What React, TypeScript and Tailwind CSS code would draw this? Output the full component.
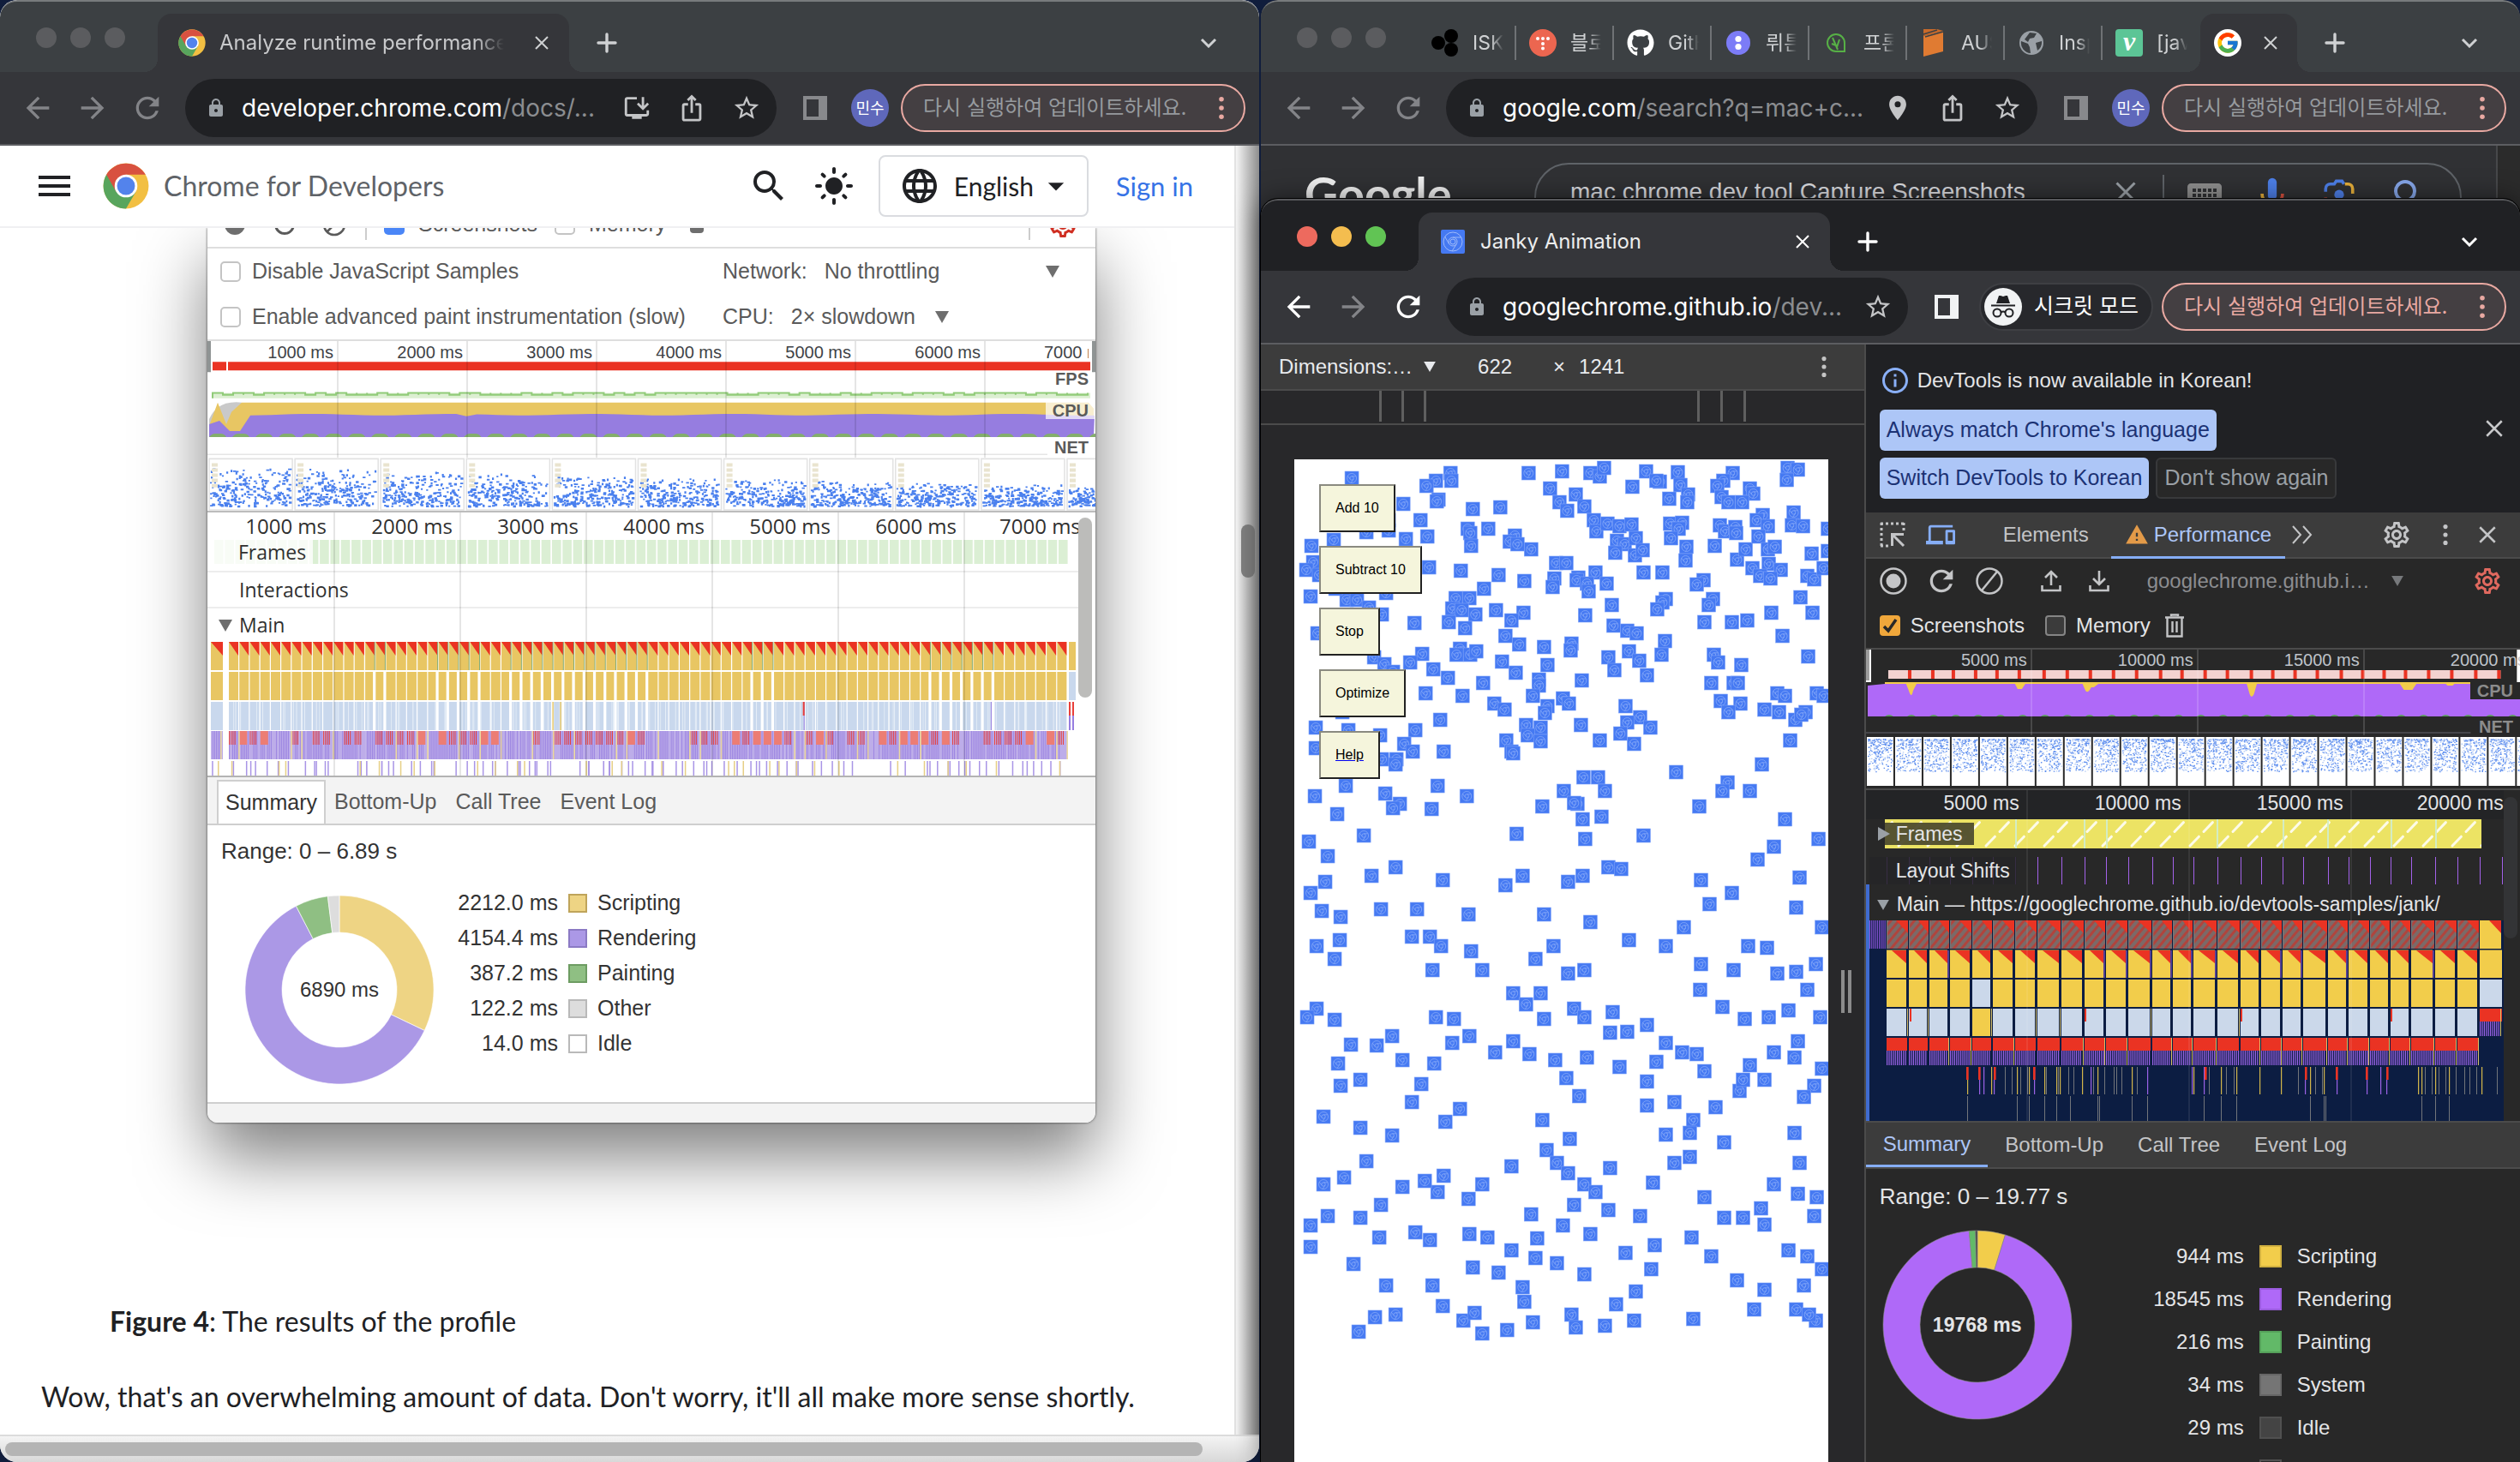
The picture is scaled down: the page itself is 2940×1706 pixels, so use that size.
import type { ReactNode } from "react";
import {
  MdArrowBack,
  MdArrowForward,
  MdRefresh,
  MdLock,
  MdInstallDesktop,
  MdIosShare,
  MdStarBorder,
  MdPlace,
  MdSearch,
  MdLightMode,
  MdLanguage,
  MdKeyboard,
  MdOutlineSettings,
  MdDevices,
  MdOutlineInfo,
  MdWarning,
  MdBlock,
  MdArrowDropDown,
} from "react-icons/md";
import { FcGoogle } from "react-icons/fc";
import { FaGithub } from "react-icons/fa";

const UI = "font-['Inter','Noto_Sans_CJK_KR',sans-serif]";
const HELV = "font-['Liberation_Sans',Arial,sans-serif]";

/* ---------- helpers ---------- */

function seeded(seed: number) {
  let s = seed;
  return () => {
    s = (s * 1664525 + 1013904223) % 4294967296;
    return s / 4294967296;
  };
}

const box = (x: number, y: number, w: number, h: number) => `M${x.toFixed(1)} ${y.toFixed(1)}h${w}v${h}h${-w}z`;

function arc(cx: number, cy: number, ro: number, ri: number, from: number, to: number) {
  const p = (r: number, t: number) => {
    const a = t * 2 * Math.PI - Math.PI / 2;
    return `${(cx + r * Math.cos(a)).toFixed(2)} ${(cy + r * Math.sin(a)).toFixed(2)}`;
  };
  const big = to - from > 0.5 ? 1 : 0;
  return `M${p(ro, from)}A${ro} ${ro} 0 ${big} 1 ${p(ro, to)}L${p(ri, to)}A${ri} ${ri} 0 ${big} 0 ${p(ri, from)}Z`;
}

function Donut({ slices, edge, className }: { slices: [number, string][]; edge: string; className: string }) {
  const total = slices.reduce((a, s) => a + s[0], 0);
  let at = 0;
  return (
    <svg viewBox="0 0 224 224" className={className} aria-hidden="true">
      {slices.map(([v, c]) => {
        const from = at / total;
        at += v;
        return <path key={c} d={arc(112, 112, 110, 67, from, at / total - 0.0001)} fill={c} stroke={edge} strokeWidth="0.6" />;
      })}
    </svg>
  );
}

function ChromeLogo({ className }: { className: string }) {
  return (
    <svg viewBox="0 0 48 48" className={className} aria-hidden="true">
      <circle cx="24" cy="24" r="23.5" fill="#f2bf42" />
      <path d="M24 24 3.7 12.2A23.5 23.5 0 0 0 24 47.5L34.2 29.9z" fill="#58a55d" />
      <path d="M24 24 13.8 29.9 3.7 12.2a23.5 23.5 0 0 1 40.6.1H24z" fill="#d85140" />
      <circle cx="24" cy="24" r="11.8" fill="#fff" />
      <circle cx="24" cy="24" r="9.3" fill="#5383ec" />
    </svg>
  );
}

function Cross({ className }: { className: string }) {
  return (
    <svg viewBox="0 0 16 16" className={className} fill="none" stroke="currentColor" strokeWidth="2" aria-hidden="true">
      <path d="M1 1l14 14M15 1L1 15" />
    </svg>
  );
}

function Plus({ className }: { className: string }) {
  return (
    <svg viewBox="0 0 24 24" className={className} fill="none" stroke="currentColor" strokeWidth="3.4" strokeLinecap="round" aria-hidden="true">
      <path d="M12 2v20M2 12h20" />
    </svg>
  );
}

function Chevron({ className }: { className: string }) {
  return (
    <svg viewBox="0 0 20 12" className={className} fill="none" stroke="currentColor" strokeWidth="3" aria-hidden="true">
      <path d="M2 2l8 8 8-8" />
    </svg>
  );
}

function Dots({ className }: { className: string }) {
  return (
    <svg viewBox="0 0 6 28" className={className} fill="currentColor" aria-hidden="true">
      <circle cx="3" cy="3" r="3" />
      <circle cx="3" cy="14" r="3" />
      <circle cx="3" cy="25" r="3" />
    </svg>
  );
}

function SidePanel({ className }: { className: string }) {
  return (
    <svg viewBox="0 0 28 28" className={className} fill="currentColor" aria-hidden="true">
      <path fillRule="evenodd" d="M0 0h28v28H0zM4 4v20h14V4z" />
    </svg>
  );
}

function Triangle({ className }: { className: string }) {
  return (
    <svg viewBox="0 0 16 14" className={className} fill="currentColor" aria-hidden="true">
      <path d="M0 0h16L8 14z" />
    </svg>
  );
}

function JankIcon({ className }: { className: string }) {
  return (
    <svg viewBox="0 0 28 28" className={className} aria-hidden="true">
      <rect width="28" height="28" rx="2" fill="#4579f2" />
      <g fill="none" stroke="#9dbafa" strokeWidth="1">
        <circle cx="14" cy="14" r="11" />
        <circle cx="14" cy="14" r="5" />
        <circle cx="14" cy="14" r="3" />
        <path d="M14 9h10M9.6 16.5L4.6 8M18.4 16.5L13 25" />
      </g>
    </svg>
  );
}

/* ---------- browser chrome ---------- */

function Lights({ active }: { active?: boolean }) {
  const dot = "h-6 w-6 rounded-full";
  return (
    <div className="flex shrink-0 gap-4 pl-[42px] pb-[28px]">
      <button aria-label="Close window" className={`${dot} ${active ? "bg-[#ed6a5e]" : "bg-[#5b5c5f]"}`} />
      <button aria-label="Minimise window" className={`${dot} ${active ? "bg-[#f4bd4f]" : "bg-[#5b5c5f]"}`} />
      <button aria-label="Zoom window" className={`${dot} ${active ? "bg-[#61c454]" : "bg-[#5b5c5f]"}`} />
    </div>
  );
}

function ActiveTab({ className, children }: { className: string; children: ReactNode }) {
  return (
    <div className={`relative flex h-[68px] shrink-0 items-center rounded-t-2xl bg-[#35363a] ${className}`}>
      <span className="absolute bottom-0 -left-4 h-4 w-4 bg-[radial-gradient(circle_at_0_0,transparent_16px,#35363a_16px)]" />
      <span className="absolute bottom-0 -right-4 h-4 w-4 bg-[radial-gradient(circle_at_100%_0,transparent_16px,#35363a_16px)]" />
      {children}
    </div>
  );
}

function TitleBar({ active, children }: { active?: boolean; children: ReactNode }) {
  return (
    <div
      className={`flex h-[84px] shrink-0 items-end rounded-t-[20px] border-t-2 ${
        active ? "border-[#57585b] bg-[#202124] text-white" : "border-[#787b7d] bg-[#3c4043] text-[#cfd1d3]"
      }`}
    >
      <Lights active={active} />
      {children}
      <div className="flex h-[68px] flex-1 items-center justify-between pl-8 pr-[49px]">
        <button aria-label="New tab">
          <Plus className="h-6 w-6" />
        </button>
        <button aria-label="Search tabs">
          <Chevron className="h-3 w-5" />
        </button>
      </div>
    </div>
  );
}

function WideTab({ icon, title, muted }: { icon: ReactNode; title: string; muted?: boolean }) {
  return (
    <ActiveTab className="ml-[38px] w-[480px] pl-6 pr-6">
      <div className="flex h-8 w-8 shrink-0 items-center justify-center">{icon}</div>
      <span
        className={`ml-4 flex-1 overflow-hidden whitespace-nowrap text-[24px] ${
          muted ? "mask-r-from-90% text-[#c8c9cb]" : "text-[#eceded]"
        }`}
      >
        {title}
      </span>
      <button aria-label="Close tab" className="ml-9">
        <Cross className="h-4 w-4" />
      </button>
    </ActiveTab>
  );
}

function UpdatePill({ active }: { active?: boolean }) {
  return (
    <button
      className={`ml-[14px] flex h-14 w-[402px] shrink-0 items-center justify-between rounded-full border-2 border-[#e9a9a2] bg-[#443f42] pl-6 pr-[23px] text-[24px] ${
        active ? "text-[#e9a9a2]" : "text-[#969a9e]"
      }`}
    >
      <span className="whitespace-nowrap">다시 실행하여 업데이트하세요.</span>
      <Dots className="h-[26px] w-[6px] text-[#e9a9a2]" />
    </button>
  );
}

function Toolbar({
  active,
  host,
  path,
  actions,
  profile,
}: {
  active?: boolean;
  host: string;
  path: string;
  actions: ReactNode;
  profile: ReactNode;
}) {
  return (
    <div className="flex h-[86px] shrink-0 items-center border-b-2 border-[#5c5d61] bg-[#35363a] pl-6 pr-4">
      <button aria-label="Back" className={active ? "text-white" : "text-[#838488]"}>
        <MdArrowBack className="h-10 w-10" />
      </button>
      <button aria-label="Forward" className="ml-6 text-[#838488]">
        <MdArrowForward className="h-10 w-10" />
      </button>
      <button aria-label="Reload" className={`ml-6 ${active ? "text-white" : "text-[#838488]"}`}>
        <MdRefresh className="h-10 w-10" />
      </button>
      <div className="ml-6 flex h-[68px] min-w-0 flex-1 items-center gap-[30px] rounded-full bg-[#202124] pl-6 pr-[18px] text-[#c4c5c7]">
        <MdLock className="h-6 w-6 shrink-0 text-[#9aa0a6]" />
        <div className="-ml-3 min-w-0 flex-1 whitespace-nowrap text-[28px] text-[#8b8d90]">
          <span className="text-white">{host}</span>
          {path}
        </div>
        {actions}
      </div>
      <button aria-label="Side panel" className={`ml-[31px] ${active ? "text-[#f1f3f4]" : "text-[#88898c]"}`}>
        <SidePanel className="h-7 w-7" />
      </button>
      {profile}
      <UpdatePill active={active} />
    </div>
  );
}

const action = "h-[34px] w-[34px]";

function Avatar() {
  return (
    <button className="ml-7 h-11 w-11 shrink-0 rounded-full bg-[#5f68bb] text-[18px] text-white">민수</button>
  );
}

/* ---------- left window: docs page ---------- */

const BLUE = "#4a80ee";

function LightOverview() {
  const r = seeded(7);
  let dots = "";
  let frames = "";
  let pads = "";
  for (let i = 0; i < 11; i++) {
    const x0 = 2 + i * 100;
    frames += box(x0, 136, 97, 59);
    for (let k = 0; k < 5; k++) pads += box(x0 + 3, 141 + k * 6, 7, 4);
    const top = 145 + i * 2.2;
    for (let k = 0; k < 230; k++) {
      const depth = Math.pow(r(), 0.62);
      dots += box(x0 + 1 + r() * 92, top + depth * (190 - top), r() > 0.5 ? 3.4 : 2.2, r() > 0.5 ? 2.6 : 1.8);
    }
  }
  let purple = "M2 111";
  for (let x = 2; x <= 1035; x += 12) {
    const y = x < 12 ? 96 : x < 26 ? 92 : x < 40 ? 104 : 85 + Math.sin(x / 26) * 0.9 + (x > 290 && x < 305 ? 2.5 : 0);
    purple += `L${x} ${y.toFixed(1)}`;
  }
  purple += "L1033 111Z";
  let green = "";
  for (let x = 2; x < 1030; x += 27) green += `M${x} 111q3 -4 7 -4h6q5 0 7 4z`;
  let fps = "M6 66V60";
  for (let x = 6; x < 1024; x += 12) fps += r() > 0.5 ? `H${x}v2v-2H${x + 12}` : `V60H${x}v2H${x + 12}v-2`;
  return (
    <svg viewBox="0 0 1035 198" preserveAspectRatio="none" className="block h-[200px] w-full" aria-hidden="true">
      <path d="M6 60H1029V66H6z" fill="#dcefd2" />
      <path d={fps} fill="none" stroke="#90cb78" strokeWidth="2" />
      <path d="M0 0h4v36H0zM1031 0h4v36h-4z" fill="#8f9494" />
      <path d="M6 24h16v10H6zM24 24h1005v10H24z" fill="#ea3323" />
      <path d="M2 90Q12 68 40 71V111H2z" fill="#c9c9c9" />
      <path d="M2 98L12 71L22 96L28 82L40 71H1027L1033 78V111H2z" fill="#e8c663" />
      <path d={purple} fill="#967de0" />
      <path d={green} fill="#83ae6c" />
      <path d="M0 131H1035" stroke="#e6e6e6" strokeWidth="1.5" />
      <path d={frames} fill="#fff" stroke="#e2e2e2" strokeWidth="1.5" />
      <path d={dots} fill={BLUE} />
      <path d={pads} fill="#e9e4cf" />
      <path d="M0 197H1035" stroke="#bcbcbc" strokeWidth="2" />
    </svg>
  );
}

const GREEN_MARKS = [13, 14, 19, 20, 21, 22, 23, 26, 27, 28, 29, 30, 31, 32, 33, 34, 35, 36, 37, 38, 39, 49, 50, 51, 66, 67, 68, 69, 70, 71, 72];

function LightFlame() {
  const r = seeded(21);
  let gold = "";
  let red = "";
  let gold2 = "";
  let sky = "";
  let skyGaps = "";
  let lilac = "";
  let violet = "";
  let salmon = "";
  let crimson = "";
  let sand = "";
  let deepV = "";
  let deepG = "";
  let green = "";
  for (let i = -1; i < 80; i++) {
    const x = i < 0 ? 4 : 25 + i * 12.22;
    const w = i < 0 ? 14 : 11;
    const gap = GREEN_MARKS.includes(i);
    gold += box(x, 0, w, 33);
    red += `M${x} 0h${w}v16z`;
    gold2 += box(x, 35, gap ? 9 : w, 33);
    sky += box(x, 70, gap ? 9 : w, 33);
    if (r() > 0.25) skyGaps += box(x + r() * 8, 70, 1, 33);
    if (r() > 0.35) skyGaps += box(x + r() * 8, 70, 0.8, 33);
    if (gap) green += box(x + w - 0.4, 0, 1, 33);
    lilac += box(x, 104, i < 0 ? 14 : 12.2, 33);
    for (let k = 0; k < 6; k++) if (r() > 0.25) violet += box(x + k * 2, 104, 0.8, 33);
    const m = r();
    if (m > 0.7) salmon += box(x, 104, 9, 16);
    else if (m > 0.25) for (let k = 0; k < 4; k++) crimson += box(x + k * 2.2, 104, 1, 16);
    if (r() > 0.55) sand += box(x + 11, 104, 1.6, 33);
    if (r() > 0.3) deepV += box(x + r() * 10, 139, 1.5, 18);
    if (r() > 0.6) deepV += box(x + r() * 10, 139, 1.5, 18);
    if (r() > 0.65) deepG += box(x + r() * 10, 139, 1.5, 18);
  }
  return (
    <svg viewBox="0 0 1015 156" preserveAspectRatio="none" className="block h-[156px] w-full" aria-hidden="true">
      <path d={gold} fill="#e8c663" />
      <path d="M1004 0h8v33h-8z" fill="#e8c663" />
      <path d={red} fill="#ea3323" />
      <path d={green} fill="#84ad79" />
      <path d={gold2} fill="#e8c663" />
      <path d={sky} fill="#c9d8ed" />
      <path d="M1004 35h8v33h-8z" fill="#c9d8ed" />
      <path d={skyGaps} fill="#e6eef7" />
      <path d={lilac} fill="#bdade9" />
      <path d={violet} fill="#967de0" />
      <path d={salmon} fill="#ec7d74" />
      <path d={crimson} fill="#e8403a" />
      <path d={sand} fill="#ecd9a0" />
      <path d="M1004 70h2v33h-2zM1008 70h2v33h-2zM913 70h1v33h-1zM695 70h1v33h-1z" fill="#967de0" />
      <path d="M1004 70h2v16h-2zM1008 70h2v16h-2zM694 70h2v16h-2z" fill="#e8403a" />
      <path d="M402 70h1.4v33h-1.4zM411 70h1.4v33h-1.4z" fill="#e8c663" />
      <path d={deepV} fill="#a995e6" />
      <path d={deepG} fill="#e6cf86" />
    </svg>
  );
}

function LightFrames() {
  let d = "";
  for (let i = 0; i < 81; i++) d += box(8 + i * 12.3, 0, 10.6, 28);
  return (
    <svg viewBox="0 0 1015 28" preserveAspectRatio="none" className="block h-7 w-full" aria-hidden="true">
      <path d={d} fill="#dbefd4" />
    </svg>
  );
}

function Tag({ children, className }: { children: ReactNode; className: string }) {
  return <span className={`absolute right-0 px-2 text-[20px] leading-5 font-bold ${className}`}>{children}</span>;
}

const lightCheck = "h-6 w-6 shrink-0 appearance-none rounded-[5px] border-2 border-[#c4c4c4] bg-white";

function LightDevtools() {
  const legend: [string, string, string][] = [
    ["2212.0 ms", "bg-[#eed484] border-[#bfa45a]", "Scripting"],
    ["4154.4 ms", "bg-[#ab98e6] border-[#8b7ac4]", "Rendering"],
    ["387.2 ms", "bg-[#8fbf83] border-[#6d9c62]", "Painting"],
    ["122.2 ms", "bg-[#dddddd] border-[#b9b9b9]", "Other"],
    ["14.0 ms", "bg-white border-[#b9b9b9]", "Idle"],
  ];
  return (
    <section
      className={`mr-[162px] ml-[242px] overflow-hidden rounded-b-xl bg-white text-[25px] text-[#5a5a5a] shadow-[0_40px_80px_rgba(0,0,0,0.5),0_0_3px_rgba(0,0,0,0.7)] ${HELV}`}
    >
      <div className="flex h-[22px] flex-col justify-end">
        <div className="flex h-[52px] shrink-0 items-center pl-5 pr-5">
          <span className="h-6 w-6 rounded-full bg-[#6e6e6e]" />
          <MdRefresh className="ml-7 h-9 w-9" />
          <MdBlock className="ml-6 h-8 w-8" />
          <span className="ml-5 h-9 w-[2px] bg-[#ccc]" />
          <label className="ml-5 flex items-center gap-4">
            <input type="checkbox" defaultChecked className="h-6 w-6 appearance-none rounded-[5px] bg-[#4a86f7]" />
            Screenshots
          </label>
          <label className="ml-5 flex items-center gap-4">
            <input type="checkbox" className={lightCheck} />
            Memory
          </label>
          <span className="ml-7 h-5 w-4 rounded-b-sm bg-[#6e6e6e]" />
          <span className="ml-auto h-9 w-[2px] bg-[#ccc]" />
          <MdOutlineSettings className="ml-5 h-9 w-9 text-[#d02f22]" />
        </div>
      </div>
      <div className="grid h-[110px] grid-cols-[586px_1fr] grid-rows-2 items-center border-y-2 border-[#dedede] pl-[15px]">
        <label className="flex items-center gap-[13px] whitespace-nowrap">
          <input type="checkbox" className={lightCheck} />
          Disable JavaScript Samples
        </label>
        <label className="flex items-center pr-[42px]">
          Network:
          <select className="ml-5 flex-1 appearance-none">
            <option>No throttling</option>
          </select>
          <Triangle className="h-[14px] w-4 text-[#6e6e6e]" />
        </label>
        <label className="flex items-center gap-[13px] whitespace-nowrap">
          <input type="checkbox" className={lightCheck} />
          Enable advanced paint instrumentation (slow)
        </label>
        <label className="flex items-center">
          CPU:
          <select className="ml-5 w-[168px] appearance-none">
            <option>2× slowdown</option>
          </select>
          <Triangle className="h-[14px] w-4 text-[#6e6e6e]" />
        </label>
      </div>

      <div className="relative overflow-hidden">
        <LightOverview />
        <div className="absolute inset-x-0 top-0 grid h-[136px] grid-cols-[153px_repeat(5,151px)_1fr] text-right text-[20px] leading-[26px] text-[#3f4347]">
          {["1000 ms", "2000 ms", "3000 ms", "4000 ms", "5000 ms", "6000 ms"].map((t) => (
            <span key={t} className="border-r-2 border-black/10 pr-1">
              {t}
            </span>
          ))}
          <span className="overflow-hidden pl-[68px] pr-2 text-left whitespace-nowrap">
            <span className="block overflow-hidden">7000 ms</span>
          </span>
        </div>
        <Tag className="top-[34px]">FPS</Tag>
        <Tag className="top-[71px] bg-white/70">CPU</Tag>
        <Tag className="top-[114px] bg-white">NET</Tag>
      </div>

      <div className="relative flex border-b-2 border-[#b3b3b3]">
        <div className="relative min-w-0 flex-1 font-['Open_Sans','Noto_Sans',sans-serif] text-[23px] text-[#303030]">
          <div className="h-8" />
          <div className="relative h-9">
            <LightFrames />
            <span className="absolute top-0 left-2 bg-white/80 pl-7 pr-2 leading-7">Frames</span>
          </div>
          <div className="flex h-[42px] items-center border-t-2 border-[#ededed] pl-[37px]">Interactions</div>
          <div className="flex h-[41px] items-center gap-2 border-t-2 border-[#ededed] pl-[13px]">
            <Triangle className="h-[14px] w-4 text-[#6e6e6e]" />
            Main
          </div>
          <LightFlame />
          <div className="absolute inset-0 grid grid-cols-[149px_repeat(5,147px)_1fr] overflow-hidden text-right text-[24px] leading-8">
            {["1000 ms", "2000 ms", "3000 ms", "4000 ms", "5000 ms", "6000 ms"].map((t) => (
              <span key={t} className="border-r-2 border-black/10 pr-2">
                {t}
              </span>
            ))}
            <span className="overflow-hidden pl-10 text-left whitespace-nowrap">7000 ms</span>
          </div>
        </div>
        <div className="w-5 bg-white pt-[6px]">
          <div className="h-[210px] w-4 rounded-full bg-[#bcbcba]" />
        </div>
      </div>

      <div className="flex h-[56px] items-end gap-[22px] border-b-2 border-[#cfcfcf] bg-[#f3f3f3] pl-[11px]" role="tablist">
        <button role="tab" aria-selected="true" className="h-[51px] border-2 border-b-0 border-[#cfcfcf] bg-white px-2 text-[#333]">
          Summary
        </button>
        <button role="tab" className="-ml-3 h-[51px]">Bottom-Up</button>
        <button role="tab" className="h-[51px]">Call Tree</button>
        <button role="tab" className="h-[51px]">Event Log</button>
      </div>
      <div className="h-[323px] px-4 pt-[14px] text-[#333]">
        <p className="text-[26px] leading-8">Range: 0 – 6.89 s</p>
        <div className="flex">
          <div className="mt-[34px] ml-[26px] grid place-items-center">
            <Donut
              className="col-start-1 row-start-1 h-56 w-56"
              edge="#fff"
              slices={[
                [2212, "#eed484"],
                [4154.4, "#ab98e6"],
                [387.2, "#8fbf83"],
                [136, "#dddddd"],
              ]}
            />
            <span className="col-start-1 row-start-1 text-[24px]">6890 ms</span>
          </div>
          <table className="mt-6 ml-[26px] self-start text-[25px]">
            <tbody>
              {legend.map(([ms, c, name]) => (
                <tr key={name} className="h-[41px]">
                  <td className="w-[117px] text-right whitespace-nowrap">{ms}</td>
                  <td className="px-3">
                    <span className={`block h-[22px] w-[22px] border-2 ${c}`} />
                  </td>
                  <td>{name}</td>
                </tr>
              ))}
            </tbody>
          </table>
        </div>
      </div>
      <div className="h-6 border-t-2 border-[#cfcfcf] bg-[#f3f3f3]" />
    </section>
  );
}

function DocsWindow() {
  return (
    <div className="relative flex h-full min-w-0 flex-col overflow-hidden rounded-[20px] bg-white">
      <TitleBar>
        <WideTab muted icon={<ChromeLogo className="h-8 w-8" />} title="Analyze runtime performance" />
      </TitleBar>
      <Toolbar
        host="developer.chrome.com"
        path="/docs/..."
        actions={
          <>
            <button aria-label="Install">
              <MdInstallDesktop className={action} />
            </button>
            <button aria-label="Share">
              <MdIosShare className={action} />
            </button>
            <button aria-label="Bookmark">
              <MdStarBorder className={action} />
            </button>
          </>
        }
        profile={<Avatar />}
      />
      <div className="flex min-h-0 flex-1">
        <div className="flex min-w-0 flex-1 flex-col">
          <header className="z-10 flex h-24 shrink-0 items-center border-b-2 border-[#f0f0f2] bg-white pl-[45px] pr-[48px] text-[#202124] font-['Lato','Open_Sans',sans-serif]">
            <button aria-label="Menu" className="flex w-[37px] flex-col gap-[6px]">
              <span className="h-1 bg-current" />
              <span className="h-1 bg-current" />
              <span className="h-1 bg-current" />
            </button>
            <ChromeLogo className="ml-[38px] h-[54px] w-[54px]" />
            <a href="#" className="ml-[17px] text-[32px] text-[#5f6368]">
              Chrome for Developers
            </a>
            <button aria-label="Search" className="ml-auto">
              <MdSearch className="h-12 w-12" />
            </button>
            <button aria-label="Theme" className="ml-7">
              <MdLightMode className="h-12 w-12" />
            </button>
            <button className="ml-7 flex h-[72px] w-[245px] items-center rounded-lg border-2 border-[#dadce0] pl-[22px] text-[30px]">
              <MdLanguage className="h-12 w-12" />
              <span className="ml-4">English</span>
              <MdArrowDropDown className="ml-1 h-11 w-11" />
            </button>
            <a href="#" className="ml-8 text-[31px] text-[#3673e6]">
              Sign in
            </a>
          </header>
          <main className="min-h-0 flex-1 overflow-hidden text-[32px] text-[#202124] font-['Lato','Open_Sans',sans-serif]">
            <LightDevtools />
            <p className="mt-[208px] ml-32 leading-12">
              <b>Figure 4</b>: The results of the profile
            </p>
            <p className="mt-10 ml-12 leading-12 whitespace-nowrap">
              Wow, that's an overwhelming amount of data. Don't worry, it'll all make more sense shortly.
            </p>
          </main>
        </div>
        <div className="w-[29px] shrink-0 border-l-2 border-[#e3e3e3] bg-linear-to-r from-[#f6f6f6] to-[#8e8e8e] pt-[442px] pl-[6px]">
          <div className="h-[62px] w-4 rounded-full bg-[#808080]" />
        </div>
      </div>
      <div className="flex h-8 shrink-0 items-center border-t-2 border-[#dcdcdc] bg-linear-to-b from-[#f4f4f4] to-[#d8d8d8] pl-[6px]">
        <div className="h-4 w-[95.5%] rounded-full bg-[#b4b4b4]" />
      </div>
    </div>
  );
}

/* ---------- google window ---------- */

function Favicon({ children }: { children: ReactNode }) {
  return <span className="flex h-8 w-8 shrink-0 items-center justify-center">{children}</span>;
}

function NarrowTab({ icon, title, last }: { icon: ReactNode; title: string; last?: boolean }) {
  return (
    <div className={`relative flex h-10 w-[114px] shrink-0 items-center gap-4 border-r-2 pl-[15px] ${last ? "border-transparent" : "border-[#6f7275]"}`}>
      <Favicon>{icon}</Favicon>
      <span className="w-9 overflow-hidden whitespace-nowrap text-[23px] mask-r-from-60%">{title}</span>
    </div>
  );
}

function GoogleWindow() {
  return (
    <div className="flex h-full flex-col overflow-hidden rounded-[20px] bg-[#303134]">
      <TitleBar>
        <div className="ml-[38px] flex h-[68px] items-center">
          <NarrowTab
            title="ISK"
            icon={
              <svg viewBox="0 0 32 32" className="h-8 w-8" fill="#000" aria-hidden="true">
                <circle cx="8" cy="16" r="8" />
                <circle cx="23" cy="8" r="8" />
                <circle cx="23" cy="24" r="8" />
              </svg>
            }
          />
          <NarrowTab
            title="블로그"
            icon={
              <svg viewBox="0 0 32 32" className="h-8 w-8" aria-hidden="true">
                <circle cx="16" cy="16" r="16" fill="#ec6650" />
                <g fill="#fff">
                  <circle cx="10" cy="11" r="2" />
                  <circle cx="16" cy="11" r="2" />
                  <circle cx="22" cy="11" r="2" />
                  <circle cx="16" cy="17" r="2" />
                  <circle cx="16" cy="22.500" r="2" />
                </g>
              </svg>
            }
          />
          <NarrowTab title="GitHub" icon={<FaGithub className="h-8 w-8 text-white" />} />
          <NarrowTab
            title="뤼튼"
            icon={
              <svg viewBox="0 0 28 28" className="h-7 w-7" aria-hidden="true">
                <circle cx="14" cy="14" r="14" fill="#7c7cf7" />
                <circle cx="14" cy="9.500" r="3.600" fill="#fff" />
                <circle cx="14" cy="18.500" r="3.600" fill="#fff" />
              </svg>
            }
          />
          <NarrowTab
            title="프론트"
            icon={
              <svg viewBox="0 0 24 24" className="h-6 w-6" fill="none" stroke="#57b046" strokeWidth="2" aria-hidden="true">
                <path d="M12 2a10 10 0 1 0 0 20h10V12A10 10 0 0 0 12 2zM8 6l6 14M12 15L7 13M13 17l3-9" />
              </svg>
            }
          />
          <NarrowTab
            title="AUSG"
            icon={
              <svg viewBox="0 0 32 32" className="h-8 w-8" aria-hidden="true">
                <path d="M4 8L27 2V26L4 32z" fill="#e07b32" />
                <path d="M4 0h16l7 2L4 8z" fill="#c96a2a" />
                <path d="M4 6L20 1M6 9L27 3" fill="none" stroke="#3c4043" strokeWidth="1.500" />
              </svg>
            }
          />
          <NarrowTab
            title="Insp"
            icon={
              <svg viewBox="0 0 28 28" className="h-7 w-7" aria-hidden="true">
                <circle cx="14" cy="14" r="14" fill="#9aa0a6" />
                <path d="M2 12l8 3 2 4 1 7a12 12 0 0 1-11-14zM12 2l8 1-3 5-5 1-2 4-4-3zM19 14l7-2a12 12 0 0 1-5 11z" fill="#3c4043" />
              </svg>
            }
          />
          <NarrowTab
            last
            title="[java]"
            icon={
              <span className="flex h-8 w-8 items-center justify-center rounded-sm bg-[#5cc596] pb-1 font-['Liberation_Serif',serif] text-[32px] leading-7 font-bold text-white italic">
                v
              </span>
            }
          />
        </div>
        <ActiveTab className="w-[113px] pl-4">
          <span className="flex h-8 w-8 items-center justify-center rounded-full bg-white">
            <FcGoogle className="h-7 w-7" />
          </span>
          <button aria-label="Close tab" className="ml-[26px]">
            <Cross className="h-4 w-4" />
          </button>
        </ActiveTab>
      </TitleBar>
      <Toolbar
        host="google.com"
        path="/search?q=mac+c..."
        actions={
          <>
            <button aria-label="Location">
              <MdPlace className={action} />
            </button>
            <button aria-label="Share">
              <MdIosShare className={action} />
            </button>
            <button aria-label="Bookmark">
              <MdStarBorder className={action} />
            </button>
          </>
        }
        profile={<Avatar />}
      />
      <div className="flex flex-1 items-start">
        <div className="flex flex-1 items-start pt-5 pr-10">
          <span className="ml-[51px] w-[268px] text-[54px] leading-[72px] font-bold text-[#f0f0f0] font-['Lato','Open_Sans',sans-serif]">Google</span>
          <div className="flex h-20 flex-1 items-start rounded-full border-2 border-[#5f6368] pt-2 pr-[35px] pl-10">
            <input
              aria-label="Search"
              defaultValue="mac chrome dev tool Capture Screenshots"
              className={`h-12 min-w-0 flex-1 bg-transparent text-[28px] text-[#dcdde0] ${HELV}`}
            />
            <button aria-label="Clear" className="mt-3 text-[#9aa0a6]">
              <Cross className="h-6 w-6" />
            </button>
            <span className="mt-1 ml-[31px] h-12 w-[2px] bg-[#5f6368]" />
            <button aria-label="Keyboard" className="mt-1 ml-[23px] text-[#8e8e8e]">
              <MdKeyboard className="h-12 w-12" />
            </button>
            <svg viewBox="0 0 24 24" className="mt-1 ml-[33px] h-11 w-11" aria-hidden="true">
              <rect x="9.200" y="2" width="5.600" height="14" rx="2.800" fill="#4d7fe8" />
              <path d="M5.500 12a6.500 6.500 0 0 0 3 5.600" fill="none" stroke="#e8b03a" strokeWidth="2" />
              <path d="M8.500 17.600a6.500 6.500 0 0 0 10-5.600" fill="none" stroke="#d8513f" strokeWidth="2" />
            </svg>
            <svg viewBox="0 0 32 32" className="mt-2 ml-[38px] h-9 w-9" fill="none" strokeWidth="3.200" aria-hidden="true">
              <path d="M2 14v-3a5 5 0 0 1 5-5h4l2-3h6l2 3" stroke="#4d7fe8" />
              <path d="M22 6h3a5 5 0 0 1 5 5v5" stroke="#e8b03a" />
              <path d="M2 20v4a5 5 0 0 0 5 5" stroke="#d8513f" />
              <circle cx="16" cy="17" r="5" fill="#4d7fe8" />
            </svg>
            <button aria-label="Search" className="mt-1 ml-10 text-[#86a7ea]">
              <MdSearch className="h-12 w-12" />
            </button>
          </div>
        </div>
        <div className="h-20 w-7 border-l-2 border-[#47484a] bg-[#2b2b2b]" />
      </div>
    </div>
  );
}

/* ---------- incognito window: demo page ---------- */

const SPRITES_TOP =
  "249,470;492,454;456,478;494,478;432,494;462,541;457,546;684,452;767,446;836,454;860,463;870,435;974,446;1008,481;1001,478;941,498;1054,451;1060,493;1079,523;1076,548;1031,538;1188,452;1166,478;1150,495;1232,502;1240,520;1162,530;1177,547;1212,547;1325,436;1349,443;1323,474;" +
  "738,503;800,523;761,549;779,576;822,563;376,555;547,571;615,566;418,606;435,661;382,669;340,606;283,645;338,640;204,672;149,692;152,744;136,769;167,786;147,856;438,761;" +
  "535,634;541,648;543,692;585,635;651,656;637,678;656,684;690,702;845,608;852,643;880,617;908,627;939,622;903,674;922,684;950,666;898,712;947,723;967,704;" +
  "1034,617;1064,615;1056,636;1036,667;1074,694;1072,738;1156,625;1170,642;1194,630;1197,649;1145,692;1200,737;1221,702;1262,590;1247,608;1276,627;1252,659;1276,702;1293,694;1339,582;1335,625;1362,627;1424,634;1383,717;1424,708;" +
  "516,772;611,786;673,807;575,832;752,746;777,746;747,798;744,824;808,795;802,802;850,777;829,815;832,840;877,813;969,778;1015,778;1117,804;1100,816;1238,764;1278,751;1308,769;1256,790;1281,798;1372,789;1390,800;1413,764;" +
  "504,863;539,863;496,894;520,901;552,915;487,941;528,960;604,901;671,909;641,934;824,919;889,884;1024,865;1015,875;1002,899;1139,865;1130,883;1119,941;1187,941;1224,934;1283,910;1357,858;1386,908;" +
  "235,868;260,868;290,892;332,845;323,915;402,944;164,976;208,830;" +
  "628,984;662,1012;723,1021;791,1010;789,1032;894,952;929,968;952,977;1021,1001;1012,1048;1312,984;1375,1052;" +
  "514,1027;507,1046;541,1047;556,1035;421,1045;391,1073;303,1056;329,1078;350,1102;449,1095;485,1122;618,1070;653,1105;732,1080;881,1055;933,1035;957,1067;896,1097;977,1113;1142,1047;1153,1072;1209,1079;" +
  "573,1138;709,1128;710,1147;815,1130;430,1173;522,1182;696,1182;770,1190;783,1207;730,1216;725,1236;600,1207;626,1225;466,1259;1136,1138;1190,1138;1202,1138;1160,1198;1208,1207;1179,1235;1299,1173;1317,1182;1396,1173;1413,1182;1268,1225;1304,1234;1344,1260;1369,1233;1358,1244;" +
  "924,1216;960,1250;927,1268;986,1285;912,1304;946,1337;861,1328;813,1277;677,1276;715,1285;682,1310;713,1329;629,1328;641,1362;646,1370;1331,1328;1260,1405;1048,1431;" +
  "159,1285;240,1292;405,1293;318,1311;378,1337;399,1362;474,1362;160,1353;323,1388;359,1388;355,1405;224,1234;" +
  "233,1474;157,1508;331,1500;366,1533;459,1474;532,1508;350,1548;211,1568;445,1550;820,1448;856,1448;772,1491;872,1491;805,1534;797,1531;719,1542;1175,1465;1164,1491;1231,1491;1105,1542;817,1584;865,1576;1318,1584";

const SPRITES_LOW =
  "814,524;826,533;848,520;868,540;897,548;853,545;943,519;824,549;815,556;822,567;834,571;833,585;819,589;830,597;859,566;881,566;913,569;936,551;947,545;975,549;984,545;960,569;989,574;1000,540;986,522;1008,541;1022,520;1058,548;1063,563;1077,556;1093,535;1103,527;1119,546;1117,565;1131,522;1133,577;" +
  "889,583;878,583;896,589;891,604;915,592;922,604;955,597;966,589;975,606;985,604;1013,585;1036,589;1047,577;1058,600;1057,616;1078,604;1087,589;1099,590;1105,606;1117,605;1124,616;1129,600;" +
  "830,635;819,628;813,633;840,650;866,645;856,651;872,660;893,633;904,634;941,618;949,625;960,634;958,618;979,628;985,633;1003,630;1012,642;1001,643;1024,638;1036,649;1030,661;1046,655;1060,667;1055,656;1071,627;1085,634;1100,633;1112,629;1132,633;1118,648;1088,663;1103,655;" +
  "832,662;846,672;834,676;884,675;892,662;903,649;914,645;930,655;941,648;951,656;967,660;974,671;987,658;1007,664;1024,673;1041,686;1053,697;1067,689;1082,679;1084,672;1097,672;1116,658;1128,676;1122,683;1133,665;" +
  "823,695;846,702;866,707;878,686;899,698;908,690;959,697;982,682;1024,688;1036,706;1051,705;1072,711;1116,705;" +
  "850,723;836,733;823,737;872,739;859,750;846,758;826,757;815,763;815,776;842,787;894,742;886,735;898,732;913,746;922,737;940,726;962,716;976,709;968,724;975,730;985,737;992,742;1001,727;1028,736;1041,724;1051,720;1060,745;1072,758;1084,758;1095,752;1103,737;1097,762;1118,743;1119,724;1130,745;1128,757;" +
  "858,770;880,767;889,772;914,768;925,770;940,778;952,756;956,771;972,763;979,750;989,768;1000,753;1020,757;1029,775;1052,770;1064,782;1080,797;1097,803;1112,778;1124,782;1133,790;1122,800;" +
  "916,789;891,800;932,792;947,801;955,783;968,786;985,793;1011,780;1027,790;" +
  "845,829;855,820;868,818;862,800;897,813;922,830;910,822;917,817;937,828;948,810;953,823;977,818;980,826;998,825;1005,812;1017,804;1016,822;1053,821;1117,815;1129,822;1125,818;1091,815";

function place(list: string, ox: number, oy: number, sx: number, sy: number) {
  return list.split(";").map((p) => {
    const [x, y] = p.split(",").map(Number);
    return [Math.round((x - ox) * sx), Math.round((y - oy) * sy)];
  });
}

function SpriteField() {
  const pts = [...place(SPRITES_TOP, 106, 408, 0.472, 0.357), ...place(SPRITES_LOW, 805, 286, 1.875, 1.875)];
  return (
    <svg viewBox="0 0 622 1241" className="absolute inset-0 h-full w-full" preserveAspectRatio="none" aria-hidden="true">
      <defs>
        <g id="sprite">
          <rect x="-8" y="-8" width="16" height="16" fill="#4579f2" stroke="#7ea2f8" strokeWidth="0.600" />
          <circle r="5.500" fill="none" stroke="#86a9f9" strokeWidth="0.800" />
          <circle r="2.200" fill="none" stroke="#86a9f9" strokeWidth="0.800" />
          <path d="M0 -2.200h5M-2 1L-5 -3M2 1L-1 5.500" stroke="#86a9f9" strokeWidth="0.800" />
        </g>
      </defs>
      {pts.map(([x, y], i) => (
        <use key={i} href="#sprite" x={x} y={y} />
      ))}
    </svg>
  );
}

function DeviceView() {
  const demo = `border-2 border-t-[#8a8a80] border-l-[#8a8a80] border-r-[#222] border-b-[#222] bg-[#f5f5dc] h-14 px-[17px] text-[16px] text-black`;
  const tick = "h-9 w-[3px] bg-[#5f5f5f]";
  return (
    <div className={`flex min-w-0 flex-1 flex-col bg-[#28282a] ${HELV}`}>
      <div className="flex h-[54px] shrink-0 items-center border-b-2 border-[#4b4b4b] bg-[#3c3c3c] pl-[21px] pr-11 text-[24px] text-[#e8eaed]">
        <button className="flex items-center gap-3">
          Dimensions:… <Triangle className="h-3 w-4" />
        </button>
        <input aria-label="Width" defaultValue="622" className="ml-12 w-20 bg-transparent" />
        <span className="ml-2">×</span>
        <input aria-label="Height" defaultValue="1241" className="ml-4 w-20 bg-transparent" />
        <button aria-label="More options" className="ml-auto text-[#c4c4c4]">
          <Dots className="h-6 w-[6px]" />
        </button>
      </div>
      <div className="flex h-10 shrink-0 justify-between border-b-2 border-[#4b4b4b] px-[138px]">
        <div className="flex gap-[23px]">
          <span className={tick} />
          <span className={tick} />
          <span className={tick} />
        </div>
        <div className="flex gap-6">
          <span className={tick} />
          <span className={tick} />
          <span className={tick} />
        </div>
      </div>
      <div className="flex min-h-0 flex-1 items-start overflow-hidden pt-10 pl-[39px]">
        <div className="relative h-[1241px] flex-1 overflow-hidden bg-white">
          <SpriteField />
          <div className="relative flex flex-col items-start gap-4 pt-[29px] pl-[29px]">
            <button className={demo}>Add 10</button>
            <button className={demo}>Subtract 10</button>
            <button className={demo}>Stop</button>
            <button className={demo}>Optimize</button>
            <a href="#" className={`${demo} flex items-center underline decoration-[#0000ee]`}>
              Help
            </a>
          </div>
        </div>
        <div className="flex h-[1241px] w-[42px] items-center justify-center gap-1">
          <span className="h-[50px] w-1 bg-[#8b8b8b]" />
          <span className="h-[50px] w-1 bg-[#8b8b8b]" />
        </div>
      </div>
    </div>
  );
}

/* ---------- incognito window: devtools ---------- */

const FRAME_STARTS = [24, 50, 74, 98, 124, 148, 174, 200, 228, 255, 280, 306, 334, 358, 382, 410, 437, 461, 486, 510, 539, 563, 588, 612, 636, 664, 690, 716, 742];
const DROPPED = [51, 78, 102, 128, 153, 179, 208, 235, 262, 289, 316, 344, 369, 396, 422, 450, 475, 501, 527, 555, 580, 605, 630, 657, 684, 712, 739];

function DarkOverview() {
  const r = seeded(99);
  let thumbs = "";
  let strong = "";
  let faint = "";
  for (let i = 0; i < 24; i++) {
    const x0 = 1 + i * 33;
    thumbs += box(x0, 102, 31, 57);
    for (let k = 0; k < 240; k++) {
      const y = 104 + Math.pow(r(), 1.4) * 38;
      const d = box(x0 + 1 + r() * 28, y, 1.5, 1.3);
      if (r() > 0.5) strong += d;
      else faint += d;
    }
  }
  const marks = DROPPED.map((x) => box(x - 2, 24, 4, 10)).join("");
  let green = "";
  for (let x = 22; x < 764; x += 26) green += `M${x} 78q5 -4 10 0z`;
  return (
    <svg viewBox="0 0 764 164" preserveAspectRatio="none" className="block h-[164px] w-full" aria-hidden="true">
      <path d="M26 24H741V34H26z" fill="#f3d2d0" />
      <path d={marks} fill="#ea3323" />
      <path d="M2 78V42L22 40H764V78z" fill="#af69f8" />
      <path d="M22 38H706V40H22zM46 38h14l-5 10q-2 10 -5 0zM174 40h12l-4 6h-5zM252 38h22l-8 6h-3q-5 10 -8 1zM444 38h13l-4 14q-3 6 -5 0zM622 38h22l-6 9h-10zM676 39h12l-3 3h-6z" fill="#f2cd4b" />
      <path d={green} fill="#5e9c63" />
      <path d="M0 97H706" stroke="#46464a" strokeWidth="2" />
      <path d={thumbs} fill="#fff" />
      <path d={faint} fill="#b4cbf5" />
      <path d={strong} fill="#5f8fef" />
      <path d="M0 0h6v38H0zM760 0h4v38h-4z" fill="#fff" />
      <path d="M0 0h4v36H0z" fill="#9d9d9d" />
      <path d="M0 163H764" stroke="#4b4b4b" strokeWidth="2" />
    </svg>
  );
}

function DarkFrames() {
  const stripes: ReactNode[] = [];
  for (let i = -1; i < 21; i++) {
    const x = 16 + i * 34;
    stripes.push(<path key={i} d={`M${x} 31L${x + 28} 2`} strokeDasharray="15 8" />);
  }
  return (
    <svg viewBox="0 0 696 34" preserveAspectRatio="none" className="block h-[34px] w-full" aria-hidden="true">
      <path d="M0 0h696v34H0z" fill="#ece364" />
      <g stroke="#fdfbe8" strokeWidth="3" strokeLinecap="round">
        {stripes}
      </g>
      <path d="M153 0v34M233 0v34M259 0v34M388 0v34M465 0v34M517 0v34M591 0v34M643 0v34" stroke="#d3ecc4" strokeWidth="2" />
    </svg>
  );
}

function LayoutShiftTicks() {
  return (
    <svg viewBox="0 0 744 32" preserveAspectRatio="none" className="absolute inset-x-0 top-2 block h-8 w-full" aria-hidden="true">
      <path d={FRAME_STARTS.map((x) => box(x, 0, 1, 32)).join("")} fill="#a362ea" />
    </svg>
  );
}

function DarkFlame() {
  const r = seeded(5);
  const n = FRAME_STARTS.length - 1;
  let task = "";
  let taskLines = "";
  let red = "";
  let gold = "";
  let sky = "";
  let redRow = "";
  let comb = "";
  let thin = "";
  let thinV = "";
  for (let i = 0; i < n; i++) {
    const x = FRAME_STARTS[i];
    const w = FRAME_STARTS[i + 1] - x;
    const last = i === n - 1;
    if (!last) {
      task += box(x, 0, w - 1, 33);
      red += `M${x + 11} 0H${x + w - 1}V15z`;
      taskLines += box(x, 0, 1.2, 33);
      if (i !== 4) red += `M${x + 6} 35H${x + w - 3}V50z`;
      else red += `M${x + 6} 35H${x + w - 3}V50z`;
    } else red += `M${x + 11} 0H${x + w - 1}V15z`;
    const cw = last ? w : w - 3;
    gold += box(x, 34.5, cw, 32.5);
    if (last) gold += box(x, 0, w - 1, 33);
    if (i === 4 || last) sky += box(x, 69, cw, 32);
    else gold += box(x, 69, cw, 32);
    if (i === 4) gold += box(x, 103, cw, 32);
    else if (!last) sky += box(x, 103, cw, 32);
    if (last) redRow += box(x, 103, w, 15);
    else redRow += box(x, 137, w - 2, 15);
    for (let k = x; k < x + w - 3; k += 2.4) comb += box(k, last ? 118 : 152, 1.2, 17);
    if (r() > 0.5) thinV += box(x + w - 2.5, 35, 1, 32);
    thin += box(x + w - 2, 103 + (r() > 0.6 ? 0 : 34), 1, 32);
  }
  const low = [118, 146, 176, 190, 208, 222, 226, 252, 270, 310, 382, 414, 432, 459, 484, 518, 534, 644, 648, 664, 680, 718];
  const gray = [162, 170, 180, 188, 210, 224, 236, 242, 265, 278, 289, 292, 298, 316, 400, 420, 429, 504, 524, 532, 652, 660, 668, 676, 688, 698, 704, 712, 736];
  const vio = [132, 137, 149, 196, 262, 328, 380, 394, 512, 549, 584, 600, 607];
  const reds = [117, 131, 149, 195, 395, 512, 548, 583, 607];
  const deep = [118, 176, 190, 208, 222, 238, 270, 272, 310, 328, 394, 414, 432, 518, 534, 536, 648, 664, 680];
  return (
    <svg viewBox="0 0 744 234" preserveAspectRatio="none" className="block h-[234px] w-full" aria-hidden="true">
      <defs>
        <pattern id="longTask" width="7" height="7" patternUnits="userSpaceOnUse" patternTransform="rotate(40)">
          <rect width="7" height="7" fill="#7b6a68" />
          <rect width="3" height="7" fill="#b0443d" />
        </pattern>
      </defs>
      <path d="M0 0H744V234H0z" fill="#0c1d42" />
      <path d={Array.from({ length: 9 }, (_, k) => box(4 + k * 2.2, 0, 1.1, 33)).join("")} fill="#8c55d8" />
      <path d={task} fill="url(#longTask)" />
      <path d={taskLines} fill="#777" />
      <path d={gold} fill="#f2cd4b" />
      <path d={sky} fill="#cbd8ea" />
      <path d={red} fill="#ea3323" />
      <path d={redRow} fill="#ea3323" />
      <path d={comb} fill="#9a62e6" />
      <path d={thin} fill="#d8c06a" />
      <path d={thinV} fill="#9a62e6" />
      <path d={low.map((x) => box(x, 171, 1.2, 32)).join("")} fill="#d3b64a" />
      <path d={gray.map((x) => box(x, 171, 1, 32)).join("")} fill="#72757a" />
      <path d={vio.map((x) => box(x, 171, 1.2, 32)).join("")} fill="#9a62e6" />
      <path d={reds.map((x) => box(x, 171, 2.6, 15)).join("")} fill="#ea3323" />
      <path d={deep.map((x) => box(x, 205, 1, 29)).join("")} fill="#72757a" />
      <path d="M51 103h2v15h-2zM255 103h2v15h-2zM437 103h2v15h-2zM612 103h2v15h-2z" fill="#ea3323" />
      <path d="M0 0h4v234H0z" fill="#3f6bd0" />
    </svg>
  );
}

function Sep() {
  return <span className="h-8 w-[2px] shrink-0 bg-[#5b5b5b]" />;
}

function DarkDevtools() {
  const legend: [string, string, string][] = [
    ["944 ms", "bg-[#f2cd4b] border-[#d0b040]", "Scripting"],
    ["18545 ms", "bg-[#af69f8] border-[#9a5bdc]", "Rendering"],
    ["216 ms", "bg-[#62b968] border-[#55a05a]", "Painting"],
    ["34 ms", "bg-[#757575] border-[#666]", "System"],
    ["29 ms", "bg-[#444] border-[#505050]", "Idle"],
    ["19768 ms", "bg-transparent border-[#505050]", "Total"],
  ];
  const blueBtn = "h-12 rounded-md bg-[#adc6f7] px-2 font-medium text-[#1c3274]";
  return (
    <div className={`flex w-[52.1%] shrink-0 flex-col overflow-hidden border-l-2 border-[#4b4b4b] bg-[#282828] text-[24px] whitespace-nowrap text-[#e4e5e7] ${HELV}`}>
      <div className="flex h-[196px] shrink-0 items-center bg-[#202124] pr-5 pl-4">
        <div className="flex flex-1 flex-col items-start gap-2">
          <div className="flex h-[52px] items-center gap-2">
            <MdOutlineInfo className="h-9 w-9 text-[#8ab0f8]" />
            DevTools is now available in Korean!
          </div>
          <button className={`${blueBtn} text-[25px]`}>Always match Chrome's language</button>
          <div className="flex gap-2 text-[25px]">
            <button className={blueBtn}>Switch DevTools to Korean</button>
            <button className="h-12 rounded-md border-2 border-[#38393b] bg-[#282828] px-2 text-[#9aa0a6]">Don't show again</button>
          </div>
        </div>
        <button aria-label="Dismiss" className="text-[#c8c9cb]">
          <Cross className="h-5 w-5" />
        </button>
      </div>

      <div className="flex h-[54px] shrink-0 items-center border-b-2 border-[#4b4b4b] bg-[#3c3c3c] pl-4 pr-7 text-[#c4c5c7]">
        <button aria-label="Inspect">
          <svg viewBox="0 0 30 30" className="h-[30px] w-[30px]" fill="none" stroke="currentColor" strokeWidth="3" aria-hidden="true">
            <path d="M1 2h28M1 28h12M2 1v28M28 1v10" strokeDasharray="3 3" />
            <path d="M28 14.500H14.500V28M15 15l13 13" />
          </svg>
        </button>
        <button aria-label="Device toolbar" className="ml-6 text-[#86aef7]">
          <MdDevices className="h-[34px] w-[34px]" />
        </button>
        <span className="ml-5">
          <Sep />
        </span>
        <span className="ml-5 block">
          <button className="px-4">Elements</button>
        </span>
        <button aria-selected="true" role="tab" className="relative ml-[10px] flex h-[52px] items-center gap-[6px] px-4 text-[#adc6f7]">
          <MdWarning className="h-7 w-7 text-[#e39a48]" />
          Performance
          <span className="absolute inset-x-0 -bottom-[2px] h-[3px] bg-[#86aef7]" />
        </button>
        <svg viewBox="0 0 24 24" className="ml-2 h-6 w-6" fill="none" stroke="currentColor" strokeWidth="2" aria-hidden="true">
          <path d="M1 2l9 10L1 22M13 2l9 10-9 10" />
        </svg>
        <span className="ml-auto">
          <Sep />
        </span>
        <button aria-label="Settings" className="ml-4">
          <MdOutlineSettings className="h-9 w-9" />
        </button>
        <button aria-label="More" className="ml-9">
          <Dots className="h-6 w-[6px]" />
        </button>
        <button aria-label="Close DevTools" className="ml-9">
          <Cross className="h-5 w-5" />
        </button>
      </div>

      <div className="flex h-[52px] shrink-0 items-center pr-5 pl-4 text-[#c4c5c7]">
        <button aria-label="Record">
          <svg viewBox="0 0 32 32" className="h-8 w-8" aria-hidden="true">
            <circle cx="16" cy="16" r="14.500" fill="none" stroke="currentColor" strokeWidth="2.500" />
            <circle cx="16" cy="16" r="8.500" fill="currentColor" />
          </svg>
        </button>
        <button aria-label="Record and reload" className="ml-5">
          <MdRefresh className="h-10 w-10" />
        </button>
        <button aria-label="Clear" className="ml-5">
          <svg viewBox="0 0 32 32" className="h-8 w-8" fill="none" stroke="currentColor" strokeWidth="2.500" aria-hidden="true">
            <circle cx="16" cy="16" r="14.500" />
            <path d="M7 27L25 5" />
          </svg>
        </button>
        <span className="ml-5">
          <Sep />
        </span>
        <button aria-label="Load profile" className="ml-6">
          <svg viewBox="0 0 24 26" className="h-[26px] w-6" fill="none" stroke="currentColor" strokeWidth="2.600" aria-hidden="true">
            <path d="M12 18V2M5 9l7-7 7 7M1.500 18v6h21v-6" />
          </svg>
        </button>
        <button aria-label="Save profile" className="ml-8">
          <svg viewBox="0 0 24 26" className="h-[26px] w-6" fill="none" stroke="currentColor" strokeWidth="2.600" aria-hidden="true">
            <path d="M12 1v16M5 10l7 7 7-7M1.500 18v6h21v-6" />
          </svg>
        </button>
        <span className="ml-6">
          <Sep />
        </span>
        <select aria-label="Profile" className="ml-5 w-[284px] appearance-none text-[#8c8d90]">
          <option>googlechrome.github.i…</option>
        </select>
        <Triangle className="h-3 w-4 text-[#77797c]" />
        <span className="ml-auto">
          <Sep />
        </span>
        <span className="ml-[46px]">
          <Sep />
        </span>
        <button aria-label="Capture settings" className="ml-3 text-[#e0695f]">
          <MdOutlineSettings className="h-9 w-9" />
        </button>
      </div>

      <div className="flex h-[54px] shrink-0 items-center border-b-2 border-[#4b4b4b] pl-4">
        <label className="relative flex items-center gap-3">
          <input type="checkbox" defaultChecked className="h-6 w-6 appearance-none rounded bg-[#f0a73b]" />
          <svg viewBox="0 0 24 24" className="pointer-events-none absolute left-0 h-6 w-6" fill="none" stroke="#282828" strokeWidth="3.500" aria-hidden="true">
            <path d="M5 13l5 5 9-13" />
          </svg>
          Screenshots
        </label>
        <label className="ml-6 flex items-center gap-3">
          <input type="checkbox" className="h-6 w-6 appearance-none rounded border-2 border-[#858585] bg-[#3b3b3b]" />
          Memory
        </label>
        <button aria-label="Collect garbage" className="ml-4 text-[#c4c5c7]">
          <svg viewBox="0 0 24 28" className="h-7 w-6" fill="none" stroke="currentColor" strokeWidth="2.400" aria-hidden="true">
            <path d="M1 4.500h22M8 3V1.500h8V3M3.500 5v21.500h17V5M9.500 9v13M14.500 9v13" />
          </svg>
        </button>
      </div>

      <div className="relative shrink-0 overflow-hidden">
        <DarkOverview />
        <div className="absolute inset-x-0 top-0 grid h-[100px] grid-cols-[repeat(4,194px)] text-right text-[20px] leading-6 text-[#bfc3c9]">
          {["5000 ms", "10000 ms", "15000 ms", "20000 ms"].map((t) => (
            <span key={t} className="border-r-2 border-white/15 pr-1">
              {t}
            </span>
          ))}
        </div>
        <Tag className="top-[38px] bg-[#282828] text-[#8c8c8c]">CPU</Tag>
        <Tag className="top-[80px] bg-[#282828] text-[#8c8c8c]">NET</Tag>
      </div>

      <div className="relative flex shrink-0 overflow-hidden text-[23px]">
        <div className="relative w-[744px] shrink-0">
          <div className="h-[34px] bg-[#202124]/60" />
          <div className="relative h-9 pr-[26px] pl-[22px]">
            <DarkFrames />
            <span className="absolute top-1 left-[22px] bg-[#4f4c2e]/95 px-[13px] leading-[26px] text-[#e4e5e7]">Frames</span>
            <svg viewBox="0 0 14 16" className="absolute top-[9px] left-[14px] h-4 w-[14px]" aria-hidden="true">
              <path d="M0 0l14 8L0 16z" fill="#9aa0a6" />
            </svg>
          </div>
          <div className="relative h-10">
            <LayoutShiftTicks />
            <span className="absolute top-2 left-1 bg-[#242427]/85 pr-2 pl-[31px] leading-8">Layout Shifts</span>
          </div>
          <div className="flex h-[42px] items-center gap-2 border-l-4 border-[#3f6bd0] pt-[5px] pl-2">
            <Triangle className="h-3 w-4 text-[#9aa0a6]" />
            Main — https://googlechrome.github.io/devtools-samples/jank/
          </div>
          <DarkFlame />
          <div className="pointer-events-none absolute inset-0 grid grid-cols-[repeat(3,189px)_177px] text-right leading-[30px]">
            {["5000 ms", "10000 ms", "15000 ms", "20000 ms"].map((t) => (
              <span key={t} className="border-r-2 border-white/8 pr-2 last:border-0 last:pr-0">
                {t}
              </span>
            ))}
          </div>
        </div>
        <div className="mt-2 h-[165px] w-4 rounded-full bg-[#333436]" />
      </div>

      <div role="tablist" className="flex h-[56px] shrink-0 items-stretch border-y-2 border-[#4b4b4b] bg-[#3c3c3c] text-[#c4c5c7]">
        <button role="tab" aria-selected="true" className="border-b-[3px] border-[#86aef7] px-5 text-[#adc6f7]">
          Summary
        </button>
        <button role="tab" className="px-5">Bottom-Up</button>
        <button role="tab" className="px-5">Call Tree</button>
        <button role="tab" className="px-5">Event Log</button>
      </div>
      <div className="flex-1 overflow-hidden pt-4 pl-4">
        <p className="text-[26px] leading-8">Range: 0 – 19.77 s</p>
        <div className="flex items-start pt-[22px]">
          <div className="ml-[2px] grid place-items-center">
            <Donut
              className="col-start-1 row-start-1 h-56 w-56"
              edge="#8f8f8f"
              slices={[
                [944, "#f2cd4b"],
                [18545, "#af69f8"],
                [216, "#62b968"],
                [63, "#3c3c3c"],
              ]}
            />
            <b className="col-start-1 row-start-1 text-[23px]">19768 ms</b>
          </div>
          <table className="mt-[7px] ml-[63px]">
            <tbody>
              {legend.map(([ms, c, name]) => (
                <tr key={name} className="h-[50px]">
                  <td className="w-[136px] text-right">{ms}</td>
                  <td className="px-[18px]">
                    <span className={`block h-[26px] w-[26px] border-2 ${c}`} />
                  </td>
                  <td>{name}</td>
                </tr>
              ))}
            </tbody>
          </table>
        </div>
      </div>
    </div>
  );
}

function IncognitoWindow() {
  return (
    <div className="flex h-full flex-col overflow-hidden rounded-t-[20px] bg-[#28282a] shadow-[0_0_0_1px_#000,0_0_30px_rgba(0,0,0,0.5)]">
      <TitleBar active>
        <WideTab icon={<JankIcon className="h-7 w-7" />} title="Janky Animation" />
      </TitleBar>
      <Toolbar
        active
        host="googlechrome.github.io"
        path="/dev..."
        actions={
          <button aria-label="Bookmark">
            <MdStarBorder className={action} />
          </button>
        }
        profile={
          <div className="ml-6 -mr-1 flex h-14 w-[203px] shrink-0 items-center gap-[14px] rounded-full border-2 border-[#3e3f43] bg-[#27282c] pl-1 text-[25px] whitespace-nowrap text-white">
            <svg viewBox="0 0 44 44" className="h-11 w-11 shrink-0" aria-hidden="true">
              <circle cx="22" cy="22" r="22" fill="#f1f3f4" />
              <path d="M14 18l3-9h2l3 1 3-1h2l3 9zM8 19.500h28v2H8z" fill="#202124" />
              <g fill="none" stroke="#202124" strokeWidth="2">
                <circle cx="15" cy="29" r="4.500" />
                <circle cx="29" cy="29" r="4.500" />
                <path d="M19.500 28.500q2.500 -2 5 0" />
              </g>
            </svg>
            시크릿 모드
          </div>
        }
      />
      <div className="flex min-h-0 flex-1">
        <DeviceView />
        <DarkDevtools />
      </div>
    </div>
  );
}

export default function App() {
  return (
    <div className={`grid h-screen grid-cols-2 overflow-hidden bg-[#101d3c] ${UI}`}>
      <div className="h-screen min-w-0 pr-px">
        <DocsWindow />
      </div>
      <div className="relative h-screen min-w-0 pl-px">
        <GoogleWindow />
        <div className="absolute inset-x-0 top-[232px] bottom-0 pl-px">
          <IncognitoWindow />
        </div>
      </div>
    </div>
  );
}
